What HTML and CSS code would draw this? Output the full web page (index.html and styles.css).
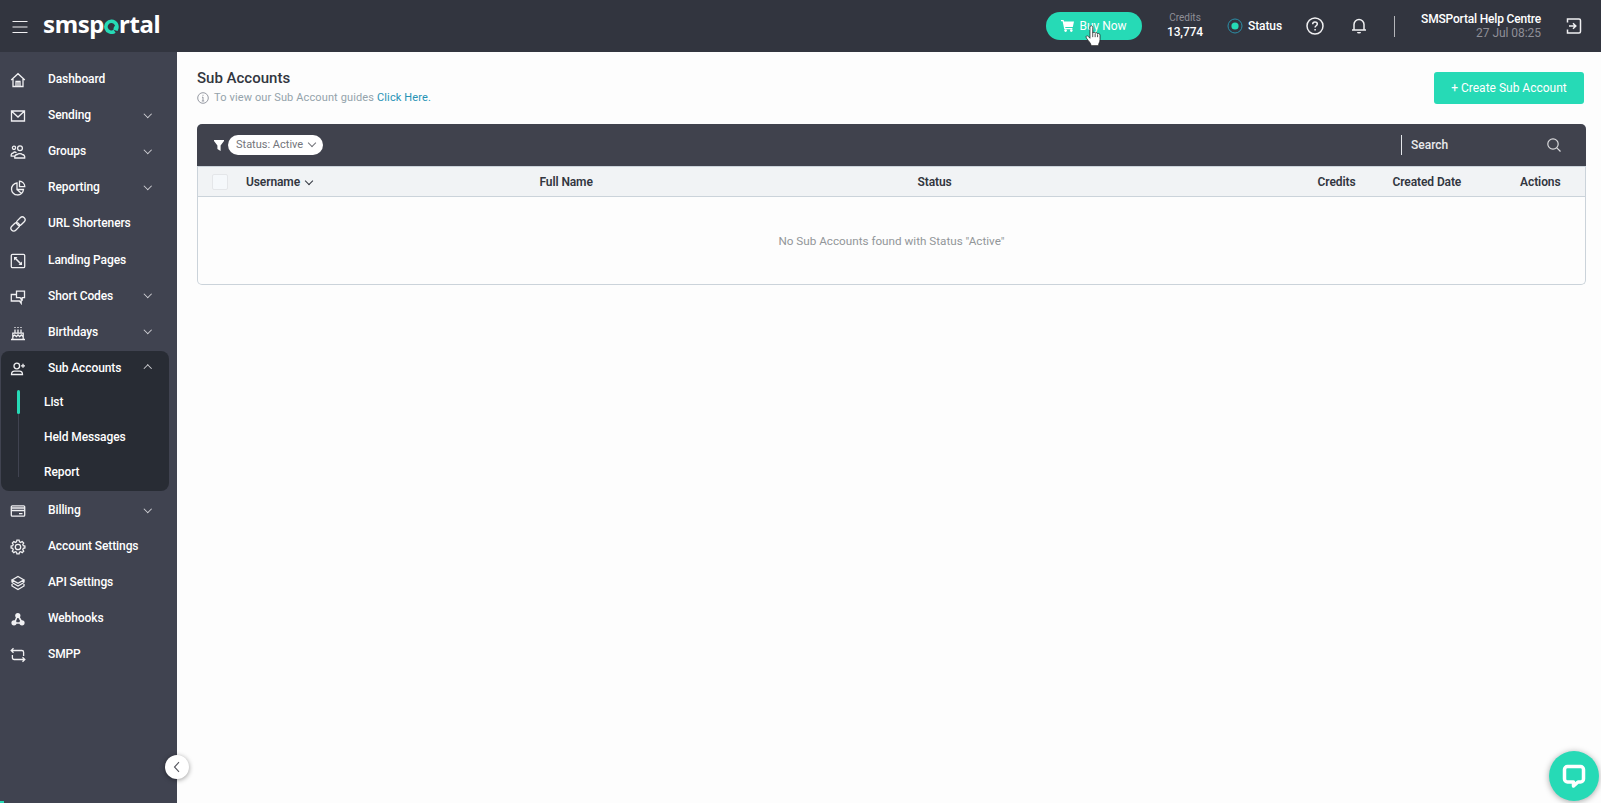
FILE: index.html
```html
<!DOCTYPE html>
<html lang="en">
<head>
  <meta charset="UTF-8">
  <meta name="viewport" content="width=device-width, initial-scale=1.0">
  <title>SMSPortal - Sub Accounts</title>
  <link rel="stylesheet" href="styles.css">
</head>
<body>
  <header class="header">
    <svg class="menu-icon" width="16" height="14" viewBox="0 0 16 14"><path d="M.5 1.500h15M.5 7h15M.5 12.500h15"/></svg>
    <div class="logo">smsp<svg class="logo-o" width="15" height="15" viewBox="0 0 15 15"><path d="M10.600 12.200A5.500 5.500 0 1 1 12.500 9.800L9.700 9.100"/></svg>rtal</div>
    <div class="header-right">
      <button class="buy-button">
        <svg width="13" height="12" viewBox="0 0 13 12"><path d="M0 0h2.600l.4 1.500h10L11.800 7H4.200l.2 1h7v1.200H3.300L1.600 1.200H0z"/><circle cx="4.600" cy="10.600" r="1.300"/><circle cx="10.300" cy="10.600" r="1.300"/></svg>
        <span>Buy Now</span>
      </button>
      <div class="credits"><span>Credits</span><b>13,774</b></div>
      <div class="status">
        <svg width="16" height="16" viewBox="0 0 16 16"><circle cx="8" cy="8" r="7" class="ring"/><circle cx="8" cy="8" r="3.600" class="dot"/></svg>
        <span>Status</span>
      </div>
      <svg class="help icon" width="18" height="18" viewBox="0 0 18 18"><circle cx="9" cy="9" r="8"/><path d="M6.700 7.300c0-1.400 1-2.200 2.300-2.200s2.300.8 2.300 2c0 1.600-2.200 1.700-2.200 3.300M9.100 12v1.400"/></svg>
      <svg class="bell icon" width="16" height="18" viewBox="0 0 16 18"><path d="M1 13h14M3 13V7.500a5 5 0 0 1 10 0V13"/><path d="M6 15a2 1.600 0 0 0 4 0z" class="fill"/></svg>
      <div class="divider"></div>
      <div class="user"><span>SMSPortal Help Centre</span><small>27 Jul 08:25</small></div>
      <svg class="exit icon" width="16" height="16" viewBox="0 0 16 16"><path d="M1.500 4.500V1H13a1.500 1.500 0 0 1 1.500 1.500v11A1.500 1.500 0 0 1 13 15H1.500v-3.500M3 8h6.500M7 5.300 9.800 8 7 10.700"/></svg>
    </div>
  </header>

  <div class="page">
    <nav class="sidebar">
      <a class="item"><svg class="icon" viewBox="0 0 16 16"><path d="M1.200 8 8 1.700 14.800 8M3 7v7.500h10V7M6 14V9.500h4V14M8 10v4"/></svg>Dashboard</a>
      <a class="item"><svg class="icon" viewBox="0 0 16 16"><path d="M1.500 3h13v10h-13zM2 3.500l6 5.500 6-5.500"/></svg>Sending<i class="chevron"></i></a>
      <a class="item"><svg class="icon" viewBox="0 0 16 16"><circle cx="4" cy="3.800" r="1.600"/><circle cx="10" cy="4.300" r="2.400"/><path d="M4.800 14c-.5-2 .8-3.500 2.500-3.500.8-1.200 4.500-1.200 5 0 1.500 0 2.800 1.500 2.400 3.500zM4.500 12.200H1.200c-.4-2 .8-3.200 2-3.200.7-1 2.300-1 3.300-.3"/></svg>Groups<i class="chevron"></i></a>
      <a class="item"><svg class="icon" viewBox="0 0 16 16"><path d="M7 3a6 6 0 1 0 6.500 6.500H7zM9.500 1.200v5.500h5.300a5.500 5.500 0 0 0-5.300-5.500zM7 9.500l4.500 4"/></svg>Reporting<i class="chevron"></i></a>
      <a class="item"><svg class="icon" viewBox="0 0 16 16"><g transform="rotate(-45 8 8)"><rect x="-.8" y="5.200" width="9.600" height="5.600" rx="2.800"/><rect x="7.200" y="5.200" width="9.600" height="5.600" rx="2.800"/></g></svg>URL Shorteners</a>
      <a class="item"><svg class="icon" viewBox="0 0 16 16"><rect x="1.300" y="1.300" width="13.400" height="13.400" rx="1.200"/><path d="M4.500 4.500l7 7" class="bold"/><path d="M4 4h3.500L4 7.500zM12 12H8.500L12 8.500z" class="fill"/></svg>Landing Pages</a>
      <a class="item"><svg class="icon" viewBox="0 0 16 16"><path d="M6.500 2.200h8v6.500h-2.300v2L10 8.700H6.500zM6 5.500H1.300V12h8.200l1.700 2.300V10"/></svg>Short Codes<i class="chevron"></i></a>
      <a class="item"><svg class="icon" viewBox="0 0 16 16"><path d="M1 14.500h14M2.800 14V8.200h10.400V14M3 11.500l1.700-1.500 1.700 1.500L8 10l1.700 1.500L11.300 10l1.700 1.500M5 4.500V8M8 4.500V8M11 4.500V8M5 2v1M8 2v1M11 2v1"/></svg>Birthdays<i class="chevron"></i></a>

      <div class="group">
        <a class="item"><svg class="icon" viewBox="0 0 16 16"><circle cx="6.800" cy="5" r="2.800"/><path d="M1.500 13.500c0-2.500 1.500-3.300 3-3.300h5c1.500 0 3 .8 3 3.300zM13 2.800v4M11 4.800h4"/></svg>Sub Accounts<i class="chevron up"></i></a>
        <div class="submenu">
          <a class="active">List</a>
          <a>Held Messages</a>
          <a>Report</a>
        </div>
      </div>

      <a class="item"><svg class="icon" viewBox="0 0 16 16"><rect x="1.300" y="2.800" width="13.400" height="10.400" rx="1"/><path d="M1.500 5h13M1.500 7.500h13M9 10.700h3.500"/></svg>Billing<i class="chevron"></i></a>
      <a class="item"><svg class="icon" viewBox="0 0 16 16"><circle cx="8" cy="8" r="2.700"/><path d="M6.900 1.200h2.200l.4 1.700 1.200.5 1.500-.9 1.500 1.500-.9 1.500.5 1.200 1.600.4v1.900l-1.600.4-.5 1.200.9 1.500-1.500 1.500-1.500-.9-1.200.5-.4 1.600H6.900l-.4-1.600-1.200-.5-1.500.9-1.500-1.500.9-1.500-.5-1.200L1.100 9V7.100l1.600-.4.500-1.200-.9-1.500 1.500-1.500 1.500.9 1.200-.5z"/></svg>Account Settings</a>
      <a class="item"><svg class="icon" viewBox="0 0 16 16"><path d="M8 1.500l6 3.400-6 3.400-6-3.400zM2 7.500L8 11l6-3.500M2 9v2l6 3.500 6-3.500V9M2 5v2.500M14 5v2.500"/></svg>API Settings</a>
      <a class="item"><svg class="icon" viewBox="0 0 16 16"><path d="M7.600 4.500l-3 7M8 4.500l4 7M4 12h8" class="bold"/><circle cx="7.800" cy="4.500" r="2.600" class="fill"/><circle cx="4" cy="11.800" r="2.600" class="fill"/><circle cx="12" cy="11.800" r="2.600" class="fill"/></svg>Webhooks</a>
      <a class="item"><svg class="icon" viewBox="0 0 16 16"><path d="M3.500 1.200L1.200 3.500l2.300 2.300M1.500 3.500h10.300c1.200 0 1.800.6 1.800 1.800V9M12.500 10.200l2.300 2.300-2.300 2.300M14.500 12.500H4.200c-1.200 0-1.800-.6-1.800-1.800V8"/></svg>SMPP</a>
      <button class="collapse"><svg width="8" height="12" viewBox="0 0 8 12"><path d="M6 1.200L1.500 6 6 10.800"/></svg></button>
      <div class="progress"></div>
    </nav>

    <main class="content">
      <div class="title-row">
        <div>
          <h1>Sub Accounts</h1>
          <p class="hint"><svg width="12" height="12" viewBox="0 0 12 12"><circle cx="6" cy="6" r="5.300"/><path d="M6 5v4M5 5.200h1M4.800 9h2.400M6 2.800v1"/></svg>To view our Sub Account guides&nbsp;<a>Click Here.</a></p>
        </div>
        <button class="create-button">+ Create Sub Account</button>
      </div>

      <div class="table">
        <div class="toolbar">
          <svg class="filter" width="10" height="11" viewBox="0 0 10 11"><path d="M0 0h10v1L6.600 5.500V11L3.400 9V5.500L0 1z"/></svg>
          <span class="pill">Status: Active<i class="chevron"></i></span>
          <div class="search">
            <span>Search</span>
            <svg width="14" height="14" viewBox="0 0 14 14"><circle cx="6" cy="6" r="5.200"/><path d="M9.800 9.800l3.700 3.700"/></svg>
          </div>
        </div>
        <div class="table-head">
          <span class="checkbox"></span>
          <span>Username<i class="chevron"></i></span>
          <span>Full Name</span>
          <span>Status</span>
          <span class="right">Credits</span>
          <span class="created">Created Date</span>
          <span class="right">Actions</span>
        </div>
        <div class="empty">No Sub Accounts found with Status "Active"</div>
      </div>
    </main>
  </div>

  <button class="chat"><svg width="26" height="26" viewBox="0 0 26 26"><path d="M6.500 3.500h13a3 3 0 0 1 3 3v9.500a3 3 0 0 1-3 3h-2.500L12.500 23v-4h-6a3 3 0 0 1-3-3V6.500a3 3 0 0 1 3-3z"/></svg></button>
  <svg class="pointer" width="16" height="21" viewBox="0.500 0 13.500 19"><path d="M4.500 2.200c0-2 2.500-2 2.500 0v5c.5-1 2-.8 2.200.3.600-.9 2-.6 2.200.5.700-.7 2.200-.3 2.200 1.200v4c0 2.500-1.300 3-1.300 5.500H5.500c0-2.500-2.500-4-4.300-7-.9-1.700.8-2.600 2-1.200l1.300 1.500zM7 7v4M9.200 8v3M11.400 8.500V11"/></svg>
</body>
</html>
```
FILE: styles.css
```css
* {
  box-sizing: border-box;
}

body {
  margin: 0;
  height: 100vh;
  overflow: hidden;
  font-family: Roboto, sans-serif;
  font-size: 12px;
  color: #32363f;
  background-color: #fdfdfd;
}

button {
  border: none;
  padding: 0;
  font-family: inherit;
  display: flex;
  align-items: center;
  justify-content: center;
}

svg {
  fill: none;
  flex-shrink: 0;
}

.icon {
  stroke: #f0f0f2;
  stroke-width: 1.3;
}

.icon .fill {
  fill: #f0f0f2;
  stroke: none;
}

.icon .bold {
  stroke-width: 1.6;
}

/* Header */
.header {
  height: 52px;
  background-color: #32353f;
  display: flex;
  align-items: center;
  padding-left: 12px;
  color: #fff;
}

.menu-icon {
  stroke: #f0f0f2;
  stroke-width: 1.2;
  margin-top: 2px;
}

.logo {
  font-family: "Noto Sans", sans-serif;
  font-weight: 700;
  font-size: 24px;
  line-height: 30px;
  letter-spacing: -0.4px;
  margin-left: 15px;
  margin-top: -5px;
}

.logo-o {
  vertical-align: -1px;
  stroke: #26dab6;
  stroke-width: 3.6;
}

.header-right {
  display: flex;
  align-items: center;
  margin-left: auto;
}

.buy-button {
  width: 96px;
  height: 28px;
  border-radius: 14px;
  background-color: #26dab6;
  color: #fff;
  font-size: 12px;
  font-weight: 400;
  gap: 5px;
  margin-top: -1px;
}

.buy-button svg {
  fill: #fff;
}

.credits {
  width: 36px;
  margin-left: 25px;
  display: flex;
  flex-direction: column;
  align-items: center;
  line-height: 14px;
  font-size: 10px;
  color: #8f8f97;
  margin-top: -3px;
}

.credits b {
  color: #fff;
  font-size: 12px;
  font-weight: 500;
  letter-spacing: -0.1px;
}

.status {
  display: flex;
  align-items: center;
  gap: 5px;
  margin-left: 24px;
  width: 55px;
  font-weight: 500;
  letter-spacing: -0.1px;
}

.ring {
  stroke: #2b8fa8;
}

.dot {
  fill: #26dab6;
}

.help {
  margin-left: 24px;
  stroke-width: 1.5;
}

.bell {
  margin-left: 27px;
  stroke-width: 1.5;
}

.divider {
  width: 1px;
  height: 21px;
  background-color: #b5b6ba;
  margin-left: 27px;
}

.user {
  width: 121px;
  margin-left: 25px;
  display: flex;
  flex-direction: column;
  align-items: flex-end;
  line-height: 14px;
  font-weight: 500;
  letter-spacing: -0.18px;
  white-space: nowrap;
}

.user small {
  font-size: 12px;
  font-weight: 400;
  letter-spacing: -0.05px;
  color: #8f8f97;
}

.exit {
  margin: 0 19px 0 25px;
  stroke-width: 1.5;
}

.page {
  display: flex;
  height: calc(100vh - 52px);
}

/* Sidebar */
.sidebar {
  position: relative;
  width: 177px;
  flex-shrink: 0;
  padding-top: 9px;
  background-color: #404350;
  color: #fff;
  font-weight: 500;
  letter-spacing: -0.1px;
}

.item {
  display: flex;
  align-items: center;
  height: 36.1px;
  padding: 0 25px 0 10px;
}

.item .icon {
  width: 16px;
  height: 16px;
  margin-right: 22px;
  position: relative;
  top: 1px;
}

.chevron {
  width: 6px;
  height: 6px;
  border: solid currentColor;
  border-width: 0 1px 1px 0;
  transform: rotate(45deg);
  display: inline-block;
}

.item .chevron {
  width: 5.5px;
  height: 5.5px;
  border-color: #d3d4d8;
  margin-left: auto;
  margin-right: 2px;
  margin-top: -3px;
}

.item .chevron.up {
  transform: rotate(225deg);
  margin-top: 2px;
}

.group {
  margin: 1px 8px 1px 1px;
  height: 140px;
  border-radius: 8px;
  background-color: #282c34;
}

.group .item {
  height: 34px;
  padding: 0 17px 0 9px;
}

.submenu {
  display: flex;
  flex-direction: column;
  margin-left: 16px;
}

.submenu a {
  height: 35.3px;
  line-height: 35px;
  padding-left: 27px;
  position: relative;
}

.submenu a::before {
  content: "";
  position: absolute;
  left: 1px;
  top: 0;
  width: 1px;
  height: 100%;
  background-color: #404350;
}

.submenu a:last-child::before {
  height: 22px;
}

.submenu a.active::before {
  top: 29px;
  height: 7px;
}

.submenu a.active::after {
  content: "";
  position: absolute;
  left: 0;
  top: 5px;
  width: 3px;
  height: 24px;
  border-radius: 2px;
  background-color: #26dab6;
}

.collapse {
  position: absolute;
  right: -12px;
  bottom: 24px;
  width: 24px;
  height: 24px;
  border-radius: 50%;
  background-color: #fff;
  box-shadow: 0 1px 5px rgba(0, 0, 0, 0.4);
}

.collapse svg {
  stroke: #55565e;
  stroke-width: 1.1;
}

.progress {
  position: absolute;
  left: 0;
  bottom: 0;
  width: 4px;
  height: 2px;
  background-color: #26dab6;
}

/* Content */
.content {
  flex: 1;
  padding: 18px 15px 0 20px;
}

.title-row {
  display: flex;
  justify-content: space-between;
  height: 54px;
  padding-right: 2px;
}

h1 {
  margin: 0;
  font-size: 15px;
  line-height: 16px;
  font-weight: 500;
}

.hint {
  display: flex;
  align-items: center;
  margin: 4px 0 0;
  line-height: 15px;
  font-size: 11px;
  letter-spacing: 0.13px;
  color: #94a3ab;
}

.hint svg {
  stroke: #8b8f99;
  stroke-width: 0.9;
  margin-right: 5px;
}

.hint a {
  color: #2793b5;
}

.create-button {
  margin-top: 2px;
  width: 150px;
  height: 32px;
  border-radius: 3px;
  background-color: #26dab6;
  color: #fff;
  font-size: 12px;
}

.table {
  height: 161px;
  border: 1px solid #cbd3da;
  border-top: none;
  border-radius: 5px;
}

.toolbar {
  height: 42px;
  margin: 0 -1px;
  padding: 0 25px 0 17px;
  border-radius: 5px 5px 0 0;
  background-color: #40424d;
  display: flex;
  align-items: center;
}

.filter {
  fill: #fff;
}

.pill {
  display: flex;
  align-items: center;
  width: 95px;
  height: 20px;
  margin-left: 4px;
  margin-top: -1px;
  padding-left: 8px;
  border-radius: 10px;
  background-color: #fff;
  font-size: 11px;
  color: #73757b;
}

.pill .chevron {
  margin: -3px 0 0 6px;
}

.search {
  display: flex;
  align-items: center;
  justify-content: space-between;
  width: 160px;
  height: 20px;
  margin-left: auto;
  padding-left: 9px;
  border-left: 1px solid #e4e6ea;
  color: #e9eaec;
  font-weight: 500;
}

.search svg {
  stroke: #d8d9dc;
  stroke-width: 1.2;
}

.table-head {
  display: grid;
  grid-template-columns: 48px 293.5px 378px 320px 118px 106px 99px;
  align-items: center;
  height: 31px;
  background-color: #f1f3f5;
  border-top: 1px solid #cbd3da;
  border-bottom: 1px solid #cbd3da;
  font-weight: 600;
  letter-spacing: -0.1px;
}

.table-head .right {
  text-align: right;
}

.table-head .created {
  padding-left: 37px;
  white-space: nowrap;
}

.table-head .chevron {
  margin: 0 0 2px 6px;
}

.checkbox {
  width: 16px;
  height: 16px;
  margin-left: 14px;
  border: 1px solid #e4e6e9;
  border-radius: 2px;
  background-color: #f5f8fb;
}

.empty {
  height: 87px;
  display: flex;
  align-items: center;
  justify-content: center;
  font-size: 11.7px;
  color: #929699;
}

/* Floating elements */
.chat {
  position: fixed;
  right: 2px;
  bottom: 2px;
  width: 50px;
  height: 50px;
  border-radius: 50%;
  background-color: #26dab6;
  box-shadow: 0 1px 6px rgba(0, 0, 0, 0.35);
}

.chat svg {
  stroke: #fff;
  stroke-width: 3.5;
  stroke-linejoin: round;
}

.pointer {
  position: fixed;
  left: 1085px;
  top: 25px;
  fill: #fff;
  stroke: #222;
  stroke-width: 0.7;
}
```
